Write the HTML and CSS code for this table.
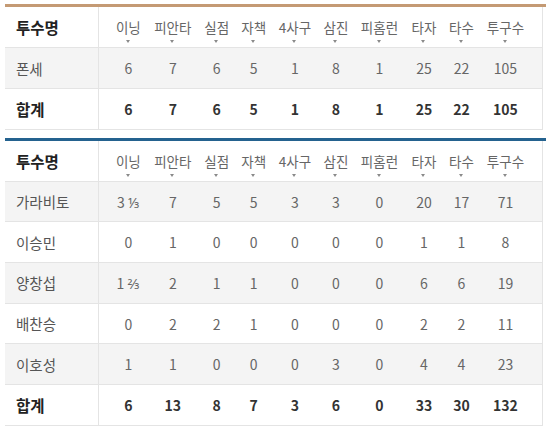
FILE: index.html
```html
<!DOCTYPE html>
<html lang="ko">
<head>
<meta charset="utf-8">
<link rel="stylesheet" href="styles.css">
</head>
<body>
<div class="board">
  <div class="tbl home">
    <div class="row head">
      <div class="name">투수명</div>
      <div class="c c1"><span class="sort">이닝</span></div>
      <div class="c"><span class="sort">피안타</span></div>
      <div class="c"><span class="sort">실점</span></div>
      <div class="c"><span class="sort">자책</span></div>
      <div class="c"><span class="sort">4사구</span></div>
      <div class="c"><span class="sort">삼진</span></div>
      <div class="c"><span class="sort">피홈런</span></div>
      <div class="c"><span class="sort">타자</span></div>
      <div class="c"><span class="sort">타수</span></div>
      <div class="c"><span class="sort">투구수</span></div>
    </div>
    <div class="row alt">
      <div class="name">폰세</div>
      <div class="c c1">6</div><div class="c">7</div><div class="c">6</div><div class="c">5</div><div class="c">1</div><div class="c">8</div><div class="c">1</div><div class="c">25</div><div class="c">22</div><div class="c">105</div>
    </div>
    <div class="row total">
      <div class="name">합계</div>
      <div class="c c1">6</div><div class="c">7</div><div class="c">6</div><div class="c">5</div><div class="c">1</div><div class="c">8</div><div class="c">1</div><div class="c">25</div><div class="c">22</div><div class="c">105</div>
    </div>
  </div>

  <div class="tbl away">
    <div class="row head">
      <div class="name">투수명</div>
      <div class="c c1"><span class="sort">이닝</span></div>
      <div class="c"><span class="sort">피안타</span></div>
      <div class="c"><span class="sort">실점</span></div>
      <div class="c"><span class="sort">자책</span></div>
      <div class="c"><span class="sort">4사구</span></div>
      <div class="c"><span class="sort">삼진</span></div>
      <div class="c"><span class="sort">피홈런</span></div>
      <div class="c"><span class="sort">타자</span></div>
      <div class="c"><span class="sort">타수</span></div>
      <div class="c"><span class="sort">투구수</span></div>
    </div>
    <div class="row alt">
      <div class="name">가라비토</div>
      <div class="c c1">3 ⅓</div><div class="c">7</div><div class="c">5</div><div class="c">5</div><div class="c">3</div><div class="c">3</div><div class="c">0</div><div class="c">20</div><div class="c">17</div><div class="c">71</div>
    </div>
    <div class="row">
      <div class="name">이승민</div>
      <div class="c c1">0</div><div class="c">1</div><div class="c">0</div><div class="c">0</div><div class="c">0</div><div class="c">0</div><div class="c">0</div><div class="c">1</div><div class="c">1</div><div class="c">8</div>
    </div>
    <div class="row alt">
      <div class="name">양창섭</div>
      <div class="c c1">1 ⅔</div><div class="c">2</div><div class="c">1</div><div class="c">1</div><div class="c">0</div><div class="c">0</div><div class="c">0</div><div class="c">6</div><div class="c">6</div><div class="c">19</div>
    </div>
    <div class="row">
      <div class="name">배찬승</div>
      <div class="c c1">0</div><div class="c">2</div><div class="c">2</div><div class="c">1</div><div class="c">0</div><div class="c">0</div><div class="c">0</div><div class="c">2</div><div class="c">2</div><div class="c">11</div>
    </div>
    <div class="row alt">
      <div class="name">이호성</div>
      <div class="c c1">1</div><div class="c">1</div><div class="c">0</div><div class="c">0</div><div class="c">0</div><div class="c">3</div><div class="c">0</div><div class="c">4</div><div class="c">4</div><div class="c">23</div>
    </div>
    <div class="row total">
      <div class="name">합계</div>
      <div class="c c1">6</div><div class="c">13</div><div class="c">8</div><div class="c">7</div><div class="c">3</div><div class="c">6</div><div class="c">0</div><div class="c">33</div><div class="c">30</div><div class="c">132</div>
    </div>
  </div>
</div>
</body>
</html>
```

FILE: styles.css
```css
html, body {
  margin: 0;
  padding: 0;
  background: #ffffff;
}

body {
  padding: 4px 0 0 5px;
  font-family: "Noto Sans CJK KR", "Noto Sans", sans-serif;
  color: #555555;
}

.board {
  display: flex;
  flex-direction: column;
  gap: 8px;
}

.tbl {
  border-top: 3px solid #c49a74;
}

.tbl.away {
  border-top-color: #24628f;
}

.row {
  display: grid;
  grid-template-columns: 94px 12px 34.6px 54.4px 33.4px 40.6px 42px 40px 47px 42px 33px 55px 1fr;
  width: 538px;
  height: 41px;
  box-sizing: border-box;
  border-bottom: 1px solid #e4e4e4;
  border-right: 1px solid #e4e4e4;
  background: #ffffff;
}

.away .row {
  height: 40.7px;
}

.row.alt {
  background: #f4f4f4;
}

.name {
  display: flex;
  align-items: center;
  padding-left: 11px;
  border-right: 1px solid #e4e4e4;
  font-size: 14.5px;
  color: #555555;
}

.head .name,
.total .name {
  font-size: 15.5px;
  font-weight: 700;
  color: #222222;
}

.c {
  display: flex;
  align-items: center;
  justify-content: center;
  font-size: 14px;
  white-space: nowrap;
  color: #666666;
}

.c1 {
  grid-column-start: 3;
}

.total .c {
  font-weight: 700;
  color: #333333;
}

.head .c {
  font-size: 13.5px;
  color: #666666;
}

.sort {
  position: relative;
}

.sort::after {
  content: "";
  position: absolute;
  left: 50%;
  bottom: -6px;
  margin-left: -2.5px;
  border-left: 2.5px solid transparent;
  border-right: 2.5px solid transparent;
  border-top: 3px solid #8a8a8a;
}
```
